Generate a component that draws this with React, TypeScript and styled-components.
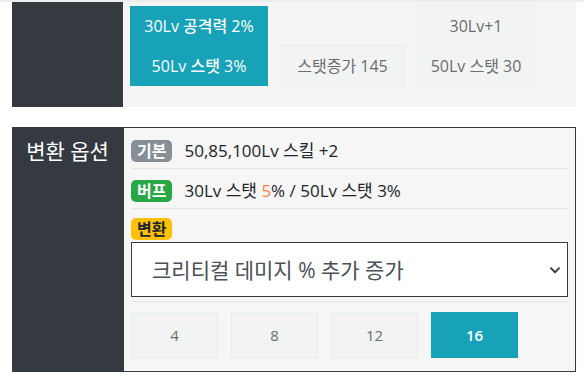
import React, { useState } from "react";
import styled, { createGlobalStyle } from "styled-components";

const GlobalStyle = createGlobalStyle`
  body {
    margin: 0;
    background: #fff;
    border-top: 2px solid #ededed;
    font-family: "Open Sans", "Noto Sans CJK KR", sans-serif;
    color: #212529;
  }
`;

const levelButtons = ["4", "8", "12", "16"];

const App = () => {
  const [level, setLevel] = useState("16");
  const [option, setOption] = useState("crit");

  return (
    <>
      <GlobalStyle />
      <Page>
        <Row>
          <Head />
          <TopCell>
            <StatButton $active $width={138}>
              <Line>30Lv 공격력 2%</Line>
              <Line>50Lv 스탯 3%</Line>
            </StatButton>
            <StatButton $width={123}>
              <Line>스탯증가 145</Line>
            </StatButton>
            <StatButton $width={118}>
              <Line>30Lv+1</Line>
              <Line>50Lv 스탯 30</Line>
            </StatButton>
          </TopCell>
        </Row>

        <Row>
          <Head>변환 옵션</Head>
          <OptionCell>
            <InfoRow>
              <Badge $bg="#868e96">기본</Badge>
              <InfoText>50,85,100Lv 스킬 +2</InfoText>
            </InfoRow>
            <InfoRow>
              <Badge $bg="#28a745">버프</Badge>
              <InfoText>
                30Lv 스탯 <Accent>5</Accent>% / 50Lv 스탯 3%
              </InfoText>
            </InfoRow>
            <SelectRow>
              <Badge $bg="#ffc107" $color="#212529">변환</Badge>
              <SelectWrap>
                <Select value={option} onChange={(e) => setOption(e.target.value)}>
                  <option value="crit">크리티컬 데미지 % 추가 증가</option>
                  <option value="atk">공격력 % 추가 증가</option>
                </Select>
                <Chevron viewBox="0 0 16 16" width="12" height="12">
                  <path d="M2.5 5.5 8 11l5.5-5.5" fill="none" stroke="#343a40" strokeWidth="2.4" strokeLinecap="round" strokeLinejoin="round" />
                </Chevron>
              </SelectWrap>
            </SelectRow>
            <LevelRow>
              {levelButtons.map((l) => (
                <LevelButton key={l} $active={level === l} onClick={() => setLevel(l)}>
                  {l}
                </LevelButton>
              ))}
            </LevelRow>
          </OptionCell>
        </Row>
      </Page>
    </>
  );
};

export default App;

const Page = styled.div`
  display: flex;
  flex-direction: column;
  gap: 20px;
  padding: 0 8px 0 12px;
`;

const Row = styled.div`
  display: flex;
`;

const Head = styled.div`
  width: 111px;
  flex-shrink: 0;
  background: #343a40;
  color: #fff;
  font-size: 21px;
  line-height: 26px;
  text-align: center;
  padding-top: 11px;
`;

const TopCell = styled.div`
  flex: 1;
  background: #f5f5f5;
  display: flex;
  align-items: flex-end;
  gap: 13px;
  padding: 3px 0 20px 7px;
  height: 105px;
  box-sizing: border-box;
`;

const StatButton = styled.div<{ $active?: boolean; $width: number }>`
  display: flex;
  flex-direction: column;
  align-items: center;
  width: ${({ $width }) => $width}px;
  box-sizing: border-box;
  font-size: 16px;
  background: ${({ $active }) => ($active ? "#17a2b8" : "#f2f4f4")};
  color: ${({ $active }) => ($active ? "#fff" : "#6c6c6c")};
  font-weight: ${({ $active }) => ($active ? 500 : 400)};
  border: 1px solid ${({ $active }) => ($active ? "#17a2b8" : "#e8eeee")};
  ${({ $active }) => ($active ? "margin-bottom: 1px; border: none;" : "")}
`;

const Line = styled.div`
  height: 40px;
  line-height: 40px;
  white-space: nowrap;
`;

const OptionCell = styled.div`
  flex: 1;
  background: #f6f6f6;
  border: 1px solid #343a40;
  padding: 1px 7px 13px 7px;
  box-shadow: 0 3px 2px rgba(0, 0, 0, 0.04);
`;

const InfoRow = styled.div`
  display: flex;
  align-items: center;
  gap: 12px;
  padding: 10px 0 5px;
  border-bottom: 1px solid #e4e4e4;
`;

const Badge = styled.span<{ $bg: string; $color?: string }>`
  display: inline-block;
  background: ${({ $bg }) => $bg};
  color: ${({ $color }) => $color || "#fff"};
  font-size: 16px;
  font-weight: 700;
  line-height: 22px;
  padding: 0 6px;
  border-radius: 5px;
`;

const InfoText = styled.span`
  font-size: 17px;
  line-height: 24px;
  color: #212529;
`;

const Accent = styled.span`
  color: #fd7e4f;
`;

const SelectRow = styled.div`
  display: flex;
  flex-direction: column;
  align-items: flex-start;
  gap: 2px;
  padding: 9px 0 4px;
  border-bottom: 1px solid #e4e4e4;
`;

const SelectWrap = styled.div`
  position: relative;
  align-self: stretch;
`;

const Select = styled.select`
  appearance: none;
  width: 100%;
  height: 55px;
  border: 1px solid #343a40;
  background: #fff;
  border-radius: 0;
  padding: 0 40px 0 20px;
  font-family: "Open Sans", "Noto Sans CJK KR", sans-serif;
  font-size: 21px;
  color: #495057;
  outline: none;
`;

const Chevron = styled.svg`
  position: absolute;
  right: 7px;
  top: 22px;
  pointer-events: none;
`;

const LevelRow = styled.div`
  display: flex;
  gap: 13px;
  padding-top: 10px;
`;

const LevelButton = styled.button<{ $active: boolean }>`
  width: 87px;
  height: 46px;
  font-family: "Open Sans", "Noto Sans CJK KR", sans-serif;
  font-size: 15px;
  font-weight: ${({ $active }) => ($active ? 600 : 400)};
  background: ${({ $active }) => ($active ? "#17a2b8" : "#f2f4f4")};
  color: ${({ $active }) => ($active ? "#fff" : "#6c6c6c")};
  border: 1px solid ${({ $active }) => ($active ? "#17a2b8" : "#e8eeee")};
  cursor: pointer;
`;
